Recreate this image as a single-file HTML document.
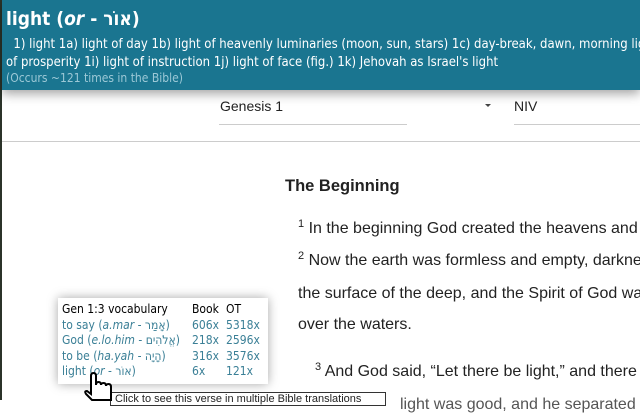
<!DOCTYPE html>
<html><head><meta charset="utf-8"><style>
*{margin:0;padding:0;box-sizing:border-box}
body{width:640px;height:400px;overflow:hidden;background:#fff;font-family:"Liberation Sans",sans-serif;position:relative}
.edge{position:absolute;left:0;top:0;width:2px;height:400px;background:#2b3329}
.hdr{position:absolute;left:2px;top:0;width:638px;height:90px;background:#1a7590;color:#fff;box-shadow:0 4px 10px rgba(0,0,0,.35);z-index:3;font-family:"DejaVu Sans Condensed","Liberation Sans Narrow","Liberation Sans","Noto Sans CJK SC",sans-serif;white-space:nowrap;overflow:hidden}
.t{position:absolute;left:4px;top:8px;font-size:19px;font-weight:bold}
.d{position:absolute;left:4px;top:36px;font-size:13px;line-height:18px}
.o{position:absolute;left:4px;top:71px;font-size:12px;color:#9cc8d6}
.sel{position:absolute;top:98px;font-size:14px;color:#222}
.line{position:absolute;height:1px;background:#ccc}
.txt{position:absolute;left:298px;font-size:16px;color:#222;white-space:nowrap}
sup{font-size:11px;vertical-align:6px}
.pop{position:absolute;left:58px;top:298px;width:210px;height:86px;background:#fff;box-shadow:0 0 10px rgba(0,0,0,.35);font-family:"DejaVu Sans Condensed","Liberation Sans",sans-serif;font-size:12px;line-height:15.5px;padding:4px 4px;z-index:4}
.pop div{white-space:nowrap;position:relative;height:15.5px}
.pop span{position:absolute}
.c{color:#3a7f96}
.tip{position:absolute;left:110px;top:392px;width:276px;height:14px;border:1px solid #333;background:#fff;font-size:11px;padding-left:4px;z-index:5;color:#222}
</style></head><body>
<div class="edge"></div>
<div class="hdr">
<div class="t">light (<i>or</i> - אוֹר)</div>
<div class="d">&nbsp;&nbsp;1) light 1a) light of day 1b) light of heavenly luminaries (moon, sun, stars) 1c) day-break, dawn, morning light<br>of prosperity 1i) light of instruction 1j) light of face (fig.) 1k) Jehovah as Israel's light</div>
<div class="o">(Occurs ~121 times in the Bible)</div>
</div>
<div class="sel" style="left:220px">Genesis 1</div>
<div style="position:absolute;left:485px;top:104px;border:3px solid transparent;border-top:3px solid #444;border-bottom:0;width:0"></div>
<div class="sel" style="left:514px">NIV</div>
<div class="line" style="left:219px;top:124px;width:188px"></div>
<div class="line" style="left:514px;top:124px;width:126px"></div>
<div class="line" style="left:2px;top:141px;width:638px"></div>
<div class="txt" style="left:285px;top:177px;font-weight:bold;font-size:16.5px">The Beginning</div>
<div class="txt" style="top:218px"><sup>1</sup> In the beginning God created the heavens and</div>
<div class="txt" style="top:250px"><sup>2</sup> Now the earth was formless and empty, darkne</div>
<div class="txt" style="top:285px">the surface of the deep, and the Spirit of God wa</div>
<div class="txt" style="top:316px">over the waters.</div>
<div class="txt" style="left:315px;top:361px"><sup>3</sup> And God said, “Let there be light,” and there</div>
<div class="txt" style="left:400px;top:396px;color:#555">light was good, and he separated</div>
<div class="pop">
<div><span style="left:0">Gen 1:3 vocabulary</span><span style="left:130px">Book</span><span style="left:164px">OT</span></div>
<div class="c"><span style="left:0">to say (<i>a.mar</i> - אָמַר)</span><span style="left:130px">606x</span><span style="left:164px">5318x</span></div>
<div class="c"><span style="left:0">God (<i>e.lo.him</i> - אֱלֹהִים)</span><span style="left:130px">218x</span><span style="left:164px">2596x</span></div>
<div class="c"><span style="left:0">to be (<i>ha.yah</i> - הָיָה)</span><span style="left:130px">316x</span><span style="left:164px">3576x</span></div>
<div class="c"><span style="left:0">light (<i>or</i> - אוֹר)</span><span style="left:130px">6x</span><span style="left:164px">121x</span></div>
</div>
<div class="tip">Click to see this verse in multiple Bible translations</div>
<svg style="position:absolute;left:82px;top:372px;z-index:6" width="34" height="30" viewBox="0 0 34 30"><path d="M10 28 L4 22 Q2 19 5 19 L9 22 L9 4 Q9 1 11.5 1 Q14 1 14 4 L14 13 Q14 10 16.5 10 Q19 10 19 13 Q19 11 21.5 11 Q24 11 24 14 Q24 12 26.5 12 Q29 12 29 15 L29 28 Z" fill="#fff" stroke="#000" stroke-width="2"/></svg>
</body></html>
